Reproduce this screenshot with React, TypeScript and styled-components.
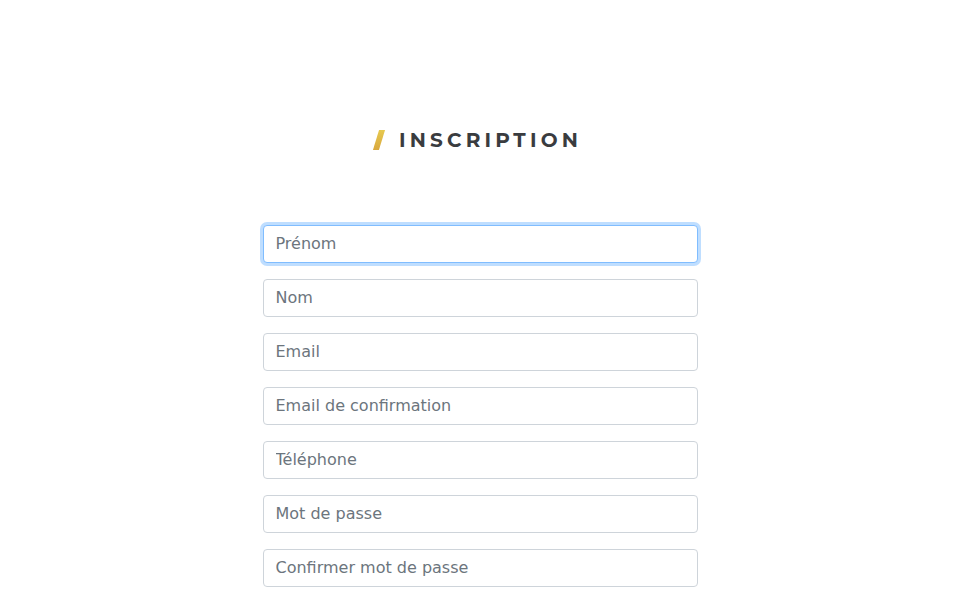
import React from "react";
import styled, { createGlobalStyle, css } from "styled-components";

const Global = createGlobalStyle`
  html, body { margin: 0; padding: 0; background: #fff; }
  body { font-family: "DejaVu Sans", sans-serif; }
  * { box-sizing: border-box; }
`;

const Page = styled.main`
  display: flex;
  flex-direction: column;
  align-items: center;
  padding-top: 128px;
`;

const Heading = styled.h1`
  display: flex;
  align-items: center;
  gap: 17px;
  margin: 0 0 73px;
  padding-right: 6px;
  height: 24px;
  font-family: "Montserrat", "Lato", "DejaVu Sans", sans-serif;
  font-weight: 700;
  font-size: 20px;
  letter-spacing: 4.2px;
  color: #3a3c3f;
`;

const Slash = styled.span`
  display: inline-block;
  width: 6px;
  height: 20px;
  background: linear-gradient(180deg, #e6c94f 0%, #d9a83e 100%);
  transform: skewX(-17deg);
  margin-left: 4px;
`;

const Form = styled.form`
  display: flex;
  flex-direction: column;
  gap: 16px;
  width: 435px;
`;

const Input = styled.input<{ $focused?: boolean }>`
  display: block;
  width: 100%;
  height: 38px;
  padding: 5px 12px 7px;
  line-height: 24px;
  font-family: "DejaVu Sans", sans-serif;
  font-size: 16px;
  color: #495057;
  background: #fff;
  border: 1px solid #ced4da;
  border-radius: 4px;
  outline: none;
  &::placeholder { color: #6c757d; opacity: 1; }
  ${(p) =>
    p.$focused &&
    css`
      border-color: #80bdff;
      box-shadow: 0 0 0 3px rgba(0, 123, 255, 0.25);
    `}
`;

const fields = [
  { ph: "Prénom", type: "text" },
  { ph: "Nom", type: "text" },
  { ph: "Email", type: "email" },
  { ph: "Email de confirmation", type: "email" },
  { ph: "Téléphone", type: "tel" },
  { ph: "Mot de passe", type: "password" },
  { ph: "Confirmer mot de passe", type: "password" },
];

export default function App() {
  return (
    <>
      <Global />
      <Page>
        <Heading>
          <Slash />
          INSCRIPTION
        </Heading>
        <Form>
          {fields.map((f, i) => (
            <Input key={f.ph} type={f.type} placeholder={f.ph} $focused={i === 0} />
          ))}
        </Form>
      </Page>
    </>
  );
}
